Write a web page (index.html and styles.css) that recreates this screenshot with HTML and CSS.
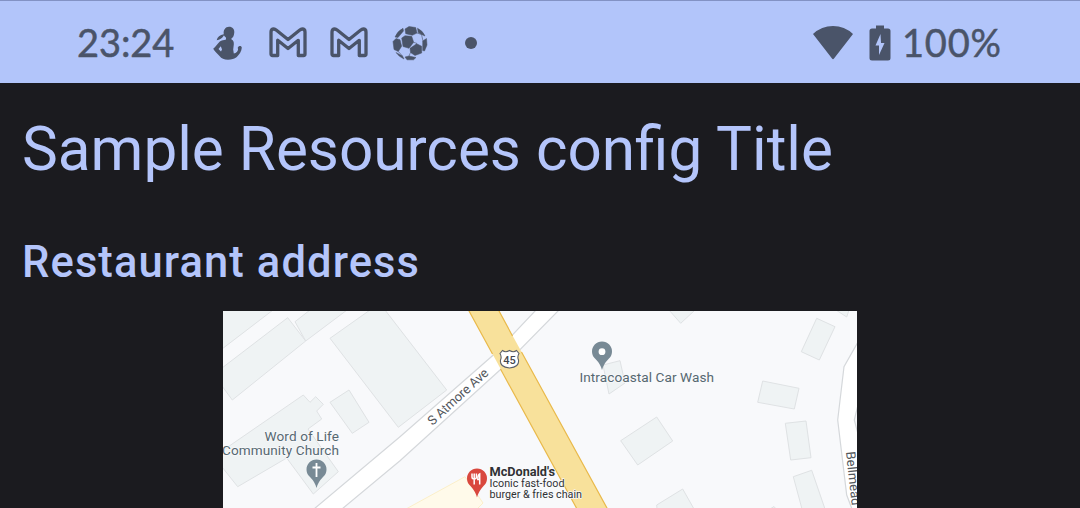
FILE: index.html
```html
<!DOCTYPE html>
<html lang="en">
<head>
<meta charset="utf-8">
<title>Sample Resources config Title</title>
<link rel="stylesheet" href="styles.css">
</head>
<body>
<header class="status">
  <div class="status-left">
    <span class="clock">23:24</span>
    <svg class="ico-person" width="30" height="34" viewBox="213 26 30 34"><path fill-rule="evenodd" d="M229 26.700C232.600 26.700 234.600 29.300 234.300 32.300C234 35.500 233.300 37.700 231.500 38.300V39.500C233.500 40.500 234 42 233.800 44.500L233.200 49.500L233.800 53.500C236.500 53 237.600 51.500 238 49.800L237.800 47.500C238.800 45.300 241.700 45.500 241.800 47.700C241.500 51.500 239.200 54.500 236.800 57C234.500 59 231.500 59.700 228 59.700C224 59.700 221.500 58.500 219.500 56C217.300 53.500 214.800 51.500 213.200 48.800C215.300 47 217.800 43.500 219.800 41.500C221.500 40.200 224 40.300 226 39.500V37.700C224.700 36.500 224.200 35.700 224 35.300C222.500 38.500 219.500 40 216.700 40.300C217.300 37 220 35 223.800 34.300C223 30 225.500 26.700 229 26.700ZM220.800 46.200L218.500 49L221 51.500L222 49.500Z"/></svg>
    <svg class="ico-mail" width="38" height="31" viewBox="0 0 38 31"><path d="M2 27V5Q2 2 4.800 2Q6 2 7.500 3.200L19 12.500L30.500 3.200Q32 2 33.200 2Q36 2 36 5V27Q36 28.500 34.500 28.500H29.300V13.300L19 21.500L8.700 13.300V28.500H3.500Q2 28.500 2 27Z"/></svg>
    <svg class="ico-mail" width="38" height="31" viewBox="0 0 38 31"><path d="M2 27V5Q2 2 4.800 2Q6 2 7.500 3.200L19 12.500L30.500 3.200Q32 2 33.200 2Q36 2 36 5V27Q36 28.500 34.500 28.500H29.300V13.300L19 21.500L8.700 13.300V28.500H3.500Q2 28.500 2 27Z"/></svg>
    <svg class="ico-ball" width="36" height="36" viewBox="0 0 36 36">
      <path class="patch" d="M9.700 13L13 10.700L19.700 11.300L21.700 17.300L17 23.300L11 21.500ZM13 4L17 1.500L23.700 2.500L25 8L20.300 10.300L13.700 8.700ZM18 23.300L24.700 18.700L29.700 21.300L29.700 28L23 30.500L18.500 27.500ZM1 16.500L4 13.500L8 14.700L9.700 21.300L6.300 26.500L2 24.500ZM13 32L17 31L24 32.500L21.500 34.800L15 34.800ZM30.700 16L34.500 13.500L35 20L32.500 26L30.700 25.500ZM25.500 3.200Q31 6 33 11L29.500 9.500L26.200 7.500ZM3 12Q5.500 6 11 3.300L11.500 6L6 12.500ZM4 27.500L10.500 31L12 34Q7 32 4 27.500Z"/>
      <path class="seam" d="M25 8L29.500 9.500L31 16M21.700 17.300L25 18.500M18.500 27.500L17 31M10.500 31L6.300 26.500"/>
    </svg>
    <span class="more-dot"></span>
  </div>
  <div class="status-right">
    <svg class="ico-wifi" width="42" height="36" viewBox="0 0 42 36"><path d="M1 9Q9.500 1 21 1T41 9L22 33.500Q21 35 20 33.500Z"/></svg>
    <svg class="ico-battery" width="22" height="36" viewBox="0 0 22 36"><path fill-rule="evenodd" d="M7 .5H15V3.500H19Q21.500 3.500 21.500 6V33Q21.500 35.500 19 35.500H3Q.5 35.500 .5 33V6Q.5 3.500 3 3.500H7ZM11.500 9L6.500 20.500H10V30L15.500 18H12Z"/></svg>
    <span class="percent">100%</span>
  </div>
</header>
<main class="content">
  <h1 class="title">Sample Resources config Title</h1>
  <h2 class="subtitle">Restaurant address</h2>
  <svg class="map" width="634" height="197" viewBox="223 311 634 197">
    <rect class="ground" x="223" y="311" width="634" height="197"/>
    <g class="building">
      <path d="M222 310H273L222 349Z"/>
      <path d="M287.700 317.700L305.700 341L232.300 400L222 386V368Z"/>
      <path d="M295 321.700L310 310H347L305.700 341Z"/>
      <path d="M330 338.300L370 310H385L446.700 390L398.300 427.300Z"/>
      <path d="M330 402.300L349 390L369 422.300L352.300 433.300Z"/>
      <path d="M303.300 395L310 402.300L315.700 396.700L323.300 404.300L316.700 411L321.700 419L308 429L338.300 471.700L313.300 494L286.700 458L237.700 486.700L222 467V451Z"/>
      <path d="M603 365L620 360.700L625 383L609 394Z"/>
      <path d="M669 310L680.700 323.300L695 310Z"/>
      <path d="M620.700 440.700L656.700 417L672.700 441L637.700 465Z"/>
      <path d="M656.700 505L682.700 489L694 509H657Z"/>
      <path d="M816.700 318.300L835 326.700L819.300 360L801.300 351.700Z"/>
      <path d="M762.700 381L799 388.300L794.300 409L757.700 402.300Z"/>
      <path d="M785.300 423.300L806 421L811 457.700L790.700 460Z"/>
      <path d="M793.300 476.700L811.700 470.300L825 509H802Z"/>
      <path d="M836 310L846.700 317L849 310ZM770 509L774 506.500L776 509Z"/>
    </g>
    <path class="lot" d="M406 509L465 476.700L483 503L477 509Z"/>
    <path class="road" d="M314 509L400 436.700L493.300 355L536 310H559L500 370L400 460.700L342 509Z"/>
    <path class="road" d="M858 342L844 366.700L837.700 420L846.700 495L852 509H870V440L858 434L854.300 420L858 405Z"/>
    <path class="highway" d="M468.500 310L577 509H607.500L498.500 310Z"/>
    <path class="highway-edge" d="M468.500 310L492.500 354M500.500 369L577 509M498.500 310L512.500 336M521.500 352L607.500 509"/>
    <path class="shield" d="M502.500 350.500Q505.500 353 509.500 350.500Q513.500 353 516.500 350.500L519 353.500Q517 357 518.500 360Q519.500 367 509.500 368Q499.500 367 500.500 360Q502 357 500 353.500Z"/>
    <text class="shield-no" x="509.500" y="363.500" text-anchor="middle">45</text>
    <text class="street" transform="translate(432.500 426) rotate(-42.500)" textLength="77">S Atmore Ave</text>
    <text class="street" transform="translate(846 452) rotate(84)">Bellmead</text>
    <g class="place">
      <text x="264.500" y="441" textLength="74.500">Word of Life</text>
      <text x="222" y="455" textLength="117">Community Church</text>
      <text x="579.500" y="382.300" textLength="134.500">Intracoastal Car Wash</text>
    </g>
    <path class="pin" d="M316.500 488Q315 482 310 477A10 10 0 1 1 323 477Q318 482 316.500 488Z"/>
    <path class="cross" d="M316.500 463V477M312.500 467.500H320.500"/>
    <path class="pin" d="M602 370Q600.500 364 595.500 359A10 10 0 1 1 608.500 359Q603.500 364 602 370Z"/>
    <circle cx="602" cy="351.700" r="3.400" fill="#fff"/>
    <path class="pin-food" d="M477 497.500Q475.500 491.500 470.500 486A10 10 0 1 1 483.500 486Q478.500 491.500 477 497.500Z"/>
    <path class="cutlery" d="M472 473.500V477Q472 479 474.200 479T476.400 477V473.500M474.200 473.500V484.500M479.700 484.500V474Q477.800 475 477.800 479.500H479.700"/>
    <text class="food-name" x="489.500" y="475.700" textLength="65.500">McDonald's</text>
    <text class="food-note" x="489.500" y="487.300" textLength="75">Iconic fast-food</text>
    <text class="food-note" x="489.500" y="498.300" textLength="92.500">burger &amp; fries chain</text>
  </svg>
</main>
</body>
</html>
```
FILE: styles.css
```css
body {
  margin: 0;
  height: 508px;
  overflow: hidden;
  background: #1b1b1f;
  color: #b4c5fb;
  font-family: Roboto, sans-serif;
}
.status {
  box-sizing: border-box;
  height: 83px;
  padding: 1px 77px 0 77px;
  display: flex;
  justify-content: space-between;
  align-items: center;
  background: #b2c5fa;
  border-top: 1px solid #8292c4;
  color: #4a5469;
  font-family: Lato, sans-serif;
  font-size: 38px;
  -webkit-text-stroke: 0.5px #4a5469;
}
.status svg { fill: #4a5469; display: block; flex: none; }
.status-left, .status-right { display: flex; align-items: center; }
.clock, .percent { padding-bottom: 2px; }
.clock { width: 136px; letter-spacing: -0.1px; }
.ico-person { margin-right: 26px; }
.status .ico-mail { fill: none; stroke: #4a5469; stroke-width: 3.3; stroke-linejoin: round; margin-right: 23px; }
.ico-ball { margin: 0 37px 0 1px; }
.status .patch { stroke: #4a5469; stroke-width: 0.5; stroke-linejoin: round; }
.status .seam { fill: none; stroke: #4a5469; stroke-width: 0.6; }
.more-dot { width: 12px; height: 12px; border-radius: 50%; background: #4a5469; }
.ico-wifi { margin-right: 15px; }
.ico-battery { margin-right: 11px; }
.percent { width: 101px; letter-spacing: 0.8px; }
.content { display: flex; flex-direction: column; }
.title {
  margin: 30px 0 0 22px;
  font-size: 60.25px;
  line-height: 73px;
  font-weight: 400;
  white-space: nowrap;
}
.subtitle {
  margin: 51px 0 0 22px;
  font-size: 43.5px;
  line-height: 52px;
  font-weight: 500;
  letter-spacing: 1.1px;
  white-space: nowrap;
}
.map { display: block; align-self: center; margin-top: 22px; flex: none; }
.ground { fill: #f8f9fb; }
.building { fill: #eff3f4; stroke: #dfe2e4; stroke-width: 1; }
.lot { fill: #fffaea; stroke: #fbefc9; }
.road { fill: #fff; stroke: #d5d8db; stroke-width: 1.2; }
.highway { fill: #f8e19b; }
.highway-edge { fill: none; stroke: #e9b94a; stroke-width: 1.2; }
.shield { fill: #fff; stroke: #5b6069; stroke-width: 1.1; }
.shield-no { font-size: 11px; font-weight: 500; fill: #44484e; }
.street { font-size: 13px; fill: #54585d; }
.place { font-size: 13.6px; fill: #566871; }
.place text, .food-name, .food-note { paint-order: stroke; stroke: #f8f9fb; stroke-width: 1.6px; stroke-linejoin: round; }
.pin { fill: #788a95; }
.cross { stroke: #fff; stroke-width: 1.8; fill: none; }
.pin-food { fill: #d9483e; }
.cutlery { stroke: #fff; stroke-width: 1.5; fill: none; }
.food-name { font-size: 12.8px; font-weight: 700; fill: #303134; }
.food-note { font-size: 10.8px; fill: #303235; }
```
